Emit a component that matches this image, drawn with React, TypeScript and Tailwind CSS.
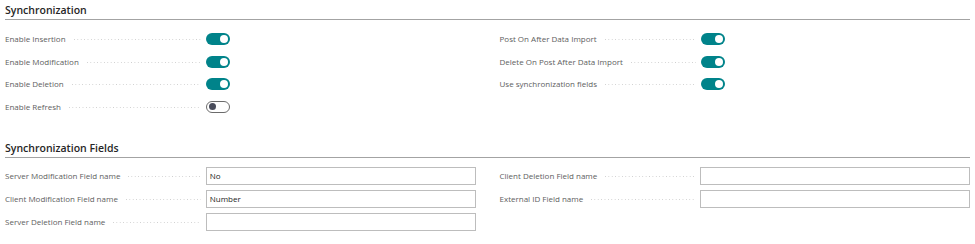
import React from 'react'

const font = { fontFamily: '"Open Sans", "Noto Sans", sans-serif' }

function Toggle({ on }: { on: boolean }) {
  return on ? (
    <div className="w-[24px] h-[12px] rounded-full bg-[#00838a] flex items-center justify-end pr-[2px]">
      <div className="w-[8px] h-[8px] rounded-full bg-white" />
    </div>
  ) : (
    <div className="w-[24px] h-[12px] rounded-full border border-[#6b6b6b] bg-white flex items-center pl-[2px]">
      <div className="w-[7px] h-[7px] rounded-full bg-[#4a4d5c]" />
    </div>
  )
}

function Field({ label, children }: { label: string; children: React.ReactNode }) {
  return (
    <div className="flex items-center">
      <div className="w-[201px] flex items-center pr-[5px]">
        <span className="text-[8px] text-[#5e5e5e] whitespace-nowrap">{label}</span>
        <span className="flex-1 ml-[8px] h-[2px] mt-[2px] bg-[linear-gradient(to_right,#cfcfcf_1px,transparent_1px)] bg-[length:3.4px_1px] bg-repeat-x" />
      </div>
      {children}
    </div>
  )
}

function TextBox({ value }: { value?: string }) {
  return (
    <div className="w-[270px] h-[18px] border border-[#bdbdbd] bg-white flex items-center px-[3px] text-[8px] text-[#222]">
      {value}
    </div>
  )
}

function Heading({ title }: { title: string }) {
  return (
    <div className="border-b border-[#a3a3a3] pb-[2px]">
      <h2 className="text-[10.5px] font-semibold text-[#262626] leading-[14px]">{title}</h2>
    </div>
  )
}

export default function App() {
  return (
    <div className="w-[975px] h-[244px] bg-white pl-[5px] pr-[5px] pt-[3px]" style={font}>
      <Heading title="Synchronization" />
      <div className="grid grid-cols-2 gap-x-[24px] mt-[8px]">
        <div className="flex flex-col">
          {[
            ['Enable Insertion', true],
            ['Enable Modification', true],
            ['Enable Deletion', true],
            ['Enable Refresh', false],
          ].map(([l, on]) => (
            <div key={l as string} className="h-[22.5px] flex items-center">
              <div className="w-full">
                <Field label={l as string}>
                  <Toggle on={on as boolean} />
                </Field>
              </div>
            </div>
          ))}
        </div>
        <div className="flex flex-col">
          {[
            'Post On After Data Import',
            'Delete On Post After Data Import',
            'Use synchronization fields',
          ].map((l) => (
            <div key={l} className="h-[22.5px] flex items-center">
              <div className="w-full">
                <Field label={l}>
                  <Toggle on />
                </Field>
              </div>
            </div>
          ))}
        </div>
      </div>

      <div className="mt-[23px]">
        <Heading title="Synchronization Fields" />
      </div>
      <div className="grid grid-cols-2 gap-x-[24px] mt-[9px]">
        <div className="flex flex-col gap-[5px]">
          <Field label="Server Modification Field name">
            <TextBox value="No" />
          </Field>
          <Field label="Client Modification Field name">
            <TextBox value="Number" />
          </Field>
          <Field label="Server Deletion Field name">
            <TextBox />
          </Field>
        </div>
        <div className="flex flex-col gap-[5px]">
          <Field label="Client Deletion Field name">
            <TextBox />
          </Field>
          <Field label="External ID Field name">
            <TextBox />
          </Field>
        </div>
      </div>
    </div>
  )
}
